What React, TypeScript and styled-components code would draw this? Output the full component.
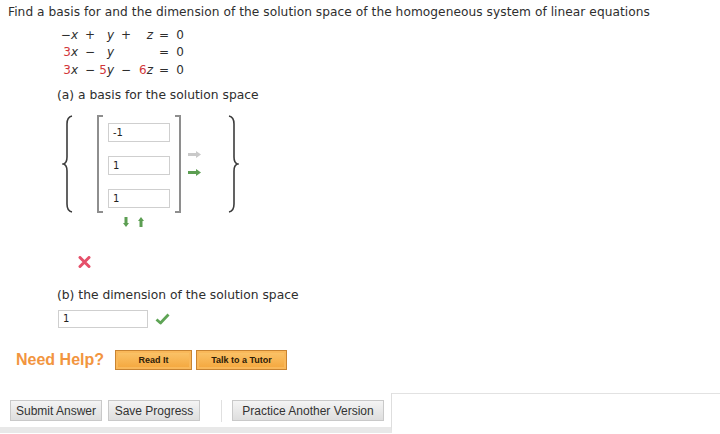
import React from "react";
import styled, { createGlobalStyle } from "styled-components";

const Global = createGlobalStyle`
  html, body { margin: 0; padding: 0; background: #fff; }
  body { width: 720px; height: 434px; overflow: hidden; }
`;

const Page = styled.div`
  display: flex;
  flex-direction: column;
  align-items: flex-start;
  padding: 5px 8px 0 8px;
  font-family: "DejaVu Sans", Verdana, sans-serif;
  color: #2e2e2e;
`;

const Title = styled.div`
  font-size: 12.2px;
  line-height: 14px;
  letter-spacing: 0.05px;
  white-space: nowrap;
`;

const Equations = styled.div`
  display: grid;
  grid-template-columns: 20px 20px 16px 18px 21px 17px 14px;
  grid-auto-rows: 17.5px;
  align-items: center;
  margin: 7px 0 0 50px;
  font-size: 12px;
`;

const Cell = styled.span<{ $align?: "left" | "right" | "center"; $pr?: number }>`
  text-align: ${(p) => p.$align ?? "right"};
  padding-right: ${(p) => p.$pr ?? 0}px;
  white-space: nowrap;
`;

const V = styled.i`
  font-style: italic;
`;

const Red = styled.span`
  color: #d2363a;
`;

const PartLabel = styled.div<{ $mt: number }>`
  font-size: 12.3px;
  line-height: 14px;
  white-space: nowrap;
  margin: ${(p) => p.$mt}px 0 0 49px;
`;

const MatrixRow = styled.div`
  display: flex;
  align-items: center;
  margin: 13px 0 0 54px;
`;

const Brace = styled.svg<{ $ml?: number }>`
  display: block;
  width: 12px;
  height: 98px;
  margin-left: ${(p) => p.$ml ?? 0}px;
`;

const Bracket = styled.div`
  display: flex;
  flex-direction: column;
  gap: 14px;
  margin-left: 23px;
  padding: 8px 11px 5px 11px;
  background:
    linear-gradient(#8e8e8e, #8e8e8e) left top / 2px 100% no-repeat,
    linear-gradient(#8e8e8e, #8e8e8e) left top / 6px 2px no-repeat,
    linear-gradient(#8e8e8e, #8e8e8e) left bottom / 6px 2px no-repeat,
    linear-gradient(#8e8e8e, #8e8e8e) right top / 2px 100% no-repeat,
    linear-gradient(#8e8e8e, #8e8e8e) right top / 6px 2px no-repeat,
    linear-gradient(#8e8e8e, #8e8e8e) right bottom / 6px 2px no-repeat;
`;

const Field = styled.div<{ $w: number; $h: number }>`
  box-sizing: border-box;
  width: ${(p) => p.$w}px;
  height: ${(p) => p.$h}px;
  border: 1px solid #cfcfcf;
  background: #fff;
  font-size: 10px;
  line-height: ${(p) => p.$h - 2}px;
  padding-left: 4px;
  color: #222;
`;

const ArrowCol = styled.div`
  display: flex;
  flex-direction: column;
  gap: 11px;
  margin-left: 7px;
`;

const VArrows = styled.div`
  display: flex;
  gap: 9px;
  margin: 4px 0 0 115px;
`;

const Icon = styled.svg`
  display: block;
`;

const Cross = styled.svg`
  display: block;
  margin: 29px 0 0 70px;
`;

const AnswerRow = styled.div`
  display: flex;
  align-items: center;
  gap: 7px;
  margin: 8px 0 0 50px;
`;

const HelpRow = styled.div`
  display: flex;
  align-items: center;
  margin: 22px 0 0 8px;
`;

const NeedHelp = styled.span`
  font-family: "Liberation Sans", Arial, sans-serif;
  font-weight: bold;
  font-size: 16px;
  color: #f2953f;
  margin-right: 11px;
`;

const HelpButton = styled.div<{ $w: number }>`
  box-sizing: border-box;
  width: ${(p) => p.$w}px;
  height: 20px;
  margin-right: 4px;
  display: flex;
  align-items: center;
  justify-content: center;
  font-family: "Liberation Sans", Arial, sans-serif;
  font-weight: bold;
  font-size: 9px;
  color: #2e2008;
  background: linear-gradient(#fbc56c, #f4a63c);
  border: 1px solid #c98431;
  box-shadow: inset 0 0 0 2px #f9b85a;
`;

const Footer = styled.div`
  display: flex;
  align-self: stretch;
  margin: 23px -8px 0 -8px;
`;

const FooterPanel = styled.div`
  display: flex;
  align-items: center;
  padding: 7px 7px 5px 8px;
  border-right: 1px solid #dedede;
  border-bottom: 6px solid #e8e8e8;
`;

const FooterRest = styled.div`
  flex: 1;
  border-top: 1px solid #e2e2e2;
`;

const Button = styled.div<{ $ml?: number; $w: number }>`
  box-sizing: border-box;
  width: ${(p) => p.$w}px;
  height: 21px;
  margin-left: ${(p) => p.$ml ?? 0}px;
  display: flex;
  align-items: center;
  justify-content: center;
  font-family: "Liberation Sans", Arial, sans-serif;
  font-size: 12px;
  color: #333;
  background: linear-gradient(#f4f4f4, #dedede);
  border: 1px solid #c9c9c9;
  white-space: nowrap;
`;

const Divider = styled.div`
  width: 1px;
  height: 22px;
  background: #e0e0e0;
  margin: 0 10px 0 21px;
`;

const LeftBrace = () => (
  <Brace viewBox="0 0 12 98">
    <path
      d="M10 1 Q5 2 5 9 L5 42 Q5 48 1.5 49 Q5 50 5 56 L5 89 Q5 96 10 97"
      fill="none"
      stroke="#3c3c3c"
      strokeWidth="1.6"
    />
  </Brace>
);

const RightBrace = () => (
  <Brace viewBox="0 0 12 98" $ml={26}>
    <path
      d="M2 1 Q7 2 7 9 L7 42 Q7 48 10.5 49 Q7 50 7 56 L7 89 Q7 96 2 97"
      fill="none"
      stroke="#3c3c3c"
      strokeWidth="1.6"
    />
  </Brace>
);

const HArrow = ({ color }: { color: string }) => (
  <Icon width="13" height="7" viewBox="0 0 13 7">
    <rect x="0" y="2" width="8" height="3" fill={color} />
    <path d="M8 0 L13 3.5 L8 7 Z" fill={color} />
  </Icon>
);

const VArrow = ({ up }: { up?: boolean }) => (
  <Icon width="6" height="10" viewBox="0 0 6 10">
    {up ? (
      <>
        <path d="M0 4 L3 0 L6 4 Z" fill="#5c9e52" />
        <rect x="1.5" y="4" width="3" height="6" fill="#5c9e52" />
      </>
    ) : (
      <>
        <rect x="1.5" y="0" width="3" height="6" fill="#5c9e52" />
        <path d="M0 6 L3 10 L6 6 Z" fill="#5c9e52" />
      </>
    )}
  </Icon>
);

const eqRows: React.ReactNode[][] = [
  [<>−<V>x</V></>, "+", <V>y</V>, "+", <V>z</V>, "=", "0"],
  [<><Red>3</Red><V>x</V></>, "−", <V>y</V>, "", "", "=", "0"],
  [
    <><Red>3</Red><V>x</V></>,
    "−",
    <><Red>5</Red><V>y</V></>,
    "−",
    <><Red>6</Red><V>z</V></>,
    "=",
    "0",
  ],
];

const cellAlign: { a: "left" | "right" | "center"; pr: number }[] = [
  { a: "right", pr: 0 },
  { a: "right", pr: 3 },
  { a: "right", pr: 0 },
  { a: "right", pr: 1 },
  { a: "right", pr: 0 },
  { a: "right", pr: 1 },
  { a: "right", pr: 0 },
];

export default function App() {
  return (
    <>
      <Global />
      <Page>
        <Title>
          Find a basis for and the dimension of the solution space of the homogeneous system of linear equations
        </Title>
        <Equations>
          {eqRows.map((row, r) =>
            row.map((c, i) => (
              <Cell key={`${r}-${i}`} $align={cellAlign[i].a} $pr={cellAlign[i].pr}>
                {c}
              </Cell>
            ))
          )}
        </Equations>
        <PartLabel $mt={9}>(a) a basis for the solution space</PartLabel>
        <MatrixRow>
          <LeftBrace />
          <Bracket>
            <Field $w={62} $h={19}>-1</Field>
            <Field $w={62} $h={19}>1</Field>
            <Field $w={62} $h={19}>1</Field>
          </Bracket>
          <ArrowCol>
            <HArrow color="#c9c9c9" />
            <HArrow color="#5c9e52" />
          </ArrowCol>
          <RightBrace />
        </MatrixRow>
        <VArrows>
          <VArrow />
          <VArrow up />
        </VArrows>
        <Cross width="13" height="12" viewBox="0 0 13 12">
          <path d="M2 1.5 L11 10.5 M11 1.5 L2 10.5" stroke="#e5506a" strokeWidth="3" strokeLinecap="round" />
        </Cross>
        <PartLabel $mt={20}>(b) the dimension of the solution space</PartLabel>
        <AnswerRow>
          <Field $w={90} $h={18}>1</Field>
          <Icon width="15" height="12" viewBox="0 0 15 12">
            <path d="M1.5 6.5 L5.5 10 L13.5 1.5" fill="none" stroke="#5ea455" strokeWidth="2.8" strokeLinejoin="round" />
          </Icon>
        </AnswerRow>
        <HelpRow>
          <NeedHelp>Need Help?</NeedHelp>
          <HelpButton $w={77}>Read It</HelpButton>
          <HelpButton $w={91}>Talk to a Tutor</HelpButton>
        </HelpRow>
        <Footer>
          <FooterPanel>
            <Button $ml={2} $w={92}>Submit Answer</Button>
            <Button $ml={6} $w={92}>Save Progress</Button>
            <Divider />
            <Button $w={152}>Practice Another Version</Button>
          </FooterPanel>
          <FooterRest />
        </Footer>
      </Page>
    </>
  );
}
